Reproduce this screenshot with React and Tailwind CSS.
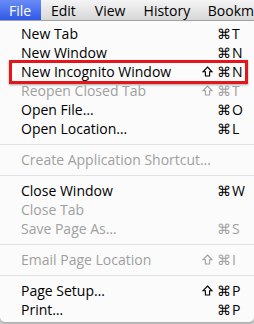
import React from 'react';

// Chrome "File" menu on Mac, New Incognito Window highlighted
const menuBar = [
    { label: 'File', w: 'w-[42px] pl-[9px]' },
    { label: 'Edit', w: 'w-[45px] pl-[10px]' },
    { label: 'View', w: 'w-[50px] pl-[10px]' },
    { label: 'History', w: 'w-[66px] pl-[10px]' },
    { label: 'Bookm', w: 'pl-[10px]' },
];

const items = [
    { label: 'New Tab', key: 'T' },
    { label: 'New Window', key: 'N' },
    { label: 'New Incognito Window', shift: true, key: 'N', marked: true },
    { label: 'Reopen Closed Tab', shift: true, key: 'T', disabled: true },
    { label: 'Open File…', key: 'O' },
    { label: 'Open Location…', key: 'L' },
    { sep: true },
    { label: 'Create Application Shortcut…', disabled: true, nokey: true },
    { sep: true },
    { label: 'Close Window', key: 'W' },
    { label: 'Close Tab', disabled: true, nokey: true },
    { label: 'Save Page As…', key: 'S', disabled: true },
    { sep: true },
    { label: 'Email Page Location', shift: true, key: 'I', disabled: true },
    { sep: true },
    { label: 'Page Setup…', shift: true, key: 'P' },
    { label: 'Print…', key: 'P' },
];

// outlined shift arrow
const ShiftIcon = () => (
    <svg width="11" height="11" viewBox="0 0 11 11" className="mr-[4px]">
        <path d="M5.5 1 L10 5.8 H7.6 V10 H3.4 V5.8 H1 Z" fill="none" stroke="currentColor" strokeWidth="1.1" strokeLinejoin="miter" />
    </svg>
);

function MenuItem({ item }) {
    if (item.sep) {
        return (
            <div className="h-[12px] flex items-center">
                <div className="h-px w-full bg-[#e4e4e4]" />
            </div>
        );
    }
    const color = item.disabled ? 'text-[#a0a0a0]' : 'text-black';
    return (
        <div className={`relative h-[19px] flex items-center pl-[21px] pr-[11px] ${color}`}>
            <span className="flex-1 whitespace-nowrap">{item.label}</span>
            {!item.nokey && (
                <span className="flex items-center">
                    {item.shift && <ShiftIcon />}
                    <span>⌘</span>
                    <span className="w-[12px] pl-px">{item.key}</span>
                </span>
            )}
            {/* red annotation box */}
            {item.marked && (
                <div className="absolute left-[9px] right-[6px] top-[-2px] bottom-[-3px] border-[3px] border-[#e3161c] shadow-[0_1px_2px_rgba(0,0,0,0.35)]" />
            )}
        </div>
    );
}

export default function App() {
    return (
        <div className="w-[254px] h-[324px] bg-[#d9d9d9] overflow-hidden" style={{ fontFamily: '"Open Sans", sans-serif' }}>
            {/* menu bar */}
            <div className="h-[21px] flex items-center text-[14px] text-black bg-gradient-to-b from-[#f4f4f4] to-[#d8d8d8] border-b border-[#a9a9a9]">
                {menuBar.map((m, i) => (
                    <div
                        key={m.label}
                        className={`h-full flex items-center whitespace-nowrap ${m.w} ${i === 0 ? 'text-white bg-gradient-to-b from-[#6a8cf6] to-[#2f58e6]' : ''}`}
                    >
                        {m.label}
                    </div>
                ))}
            </div>

            {/* dropdown */}
            <div className="bg-[#fbfbfb] rounded-b-[5px] pt-[3px] pb-[3px] text-[14px] leading-none shadow-[0_2px_4px_rgba(0,0,0,0.25)]">
                {items.map((item, i) => <MenuItem key={i} item={item} />)}
            </div>
        </div>
    );
}
